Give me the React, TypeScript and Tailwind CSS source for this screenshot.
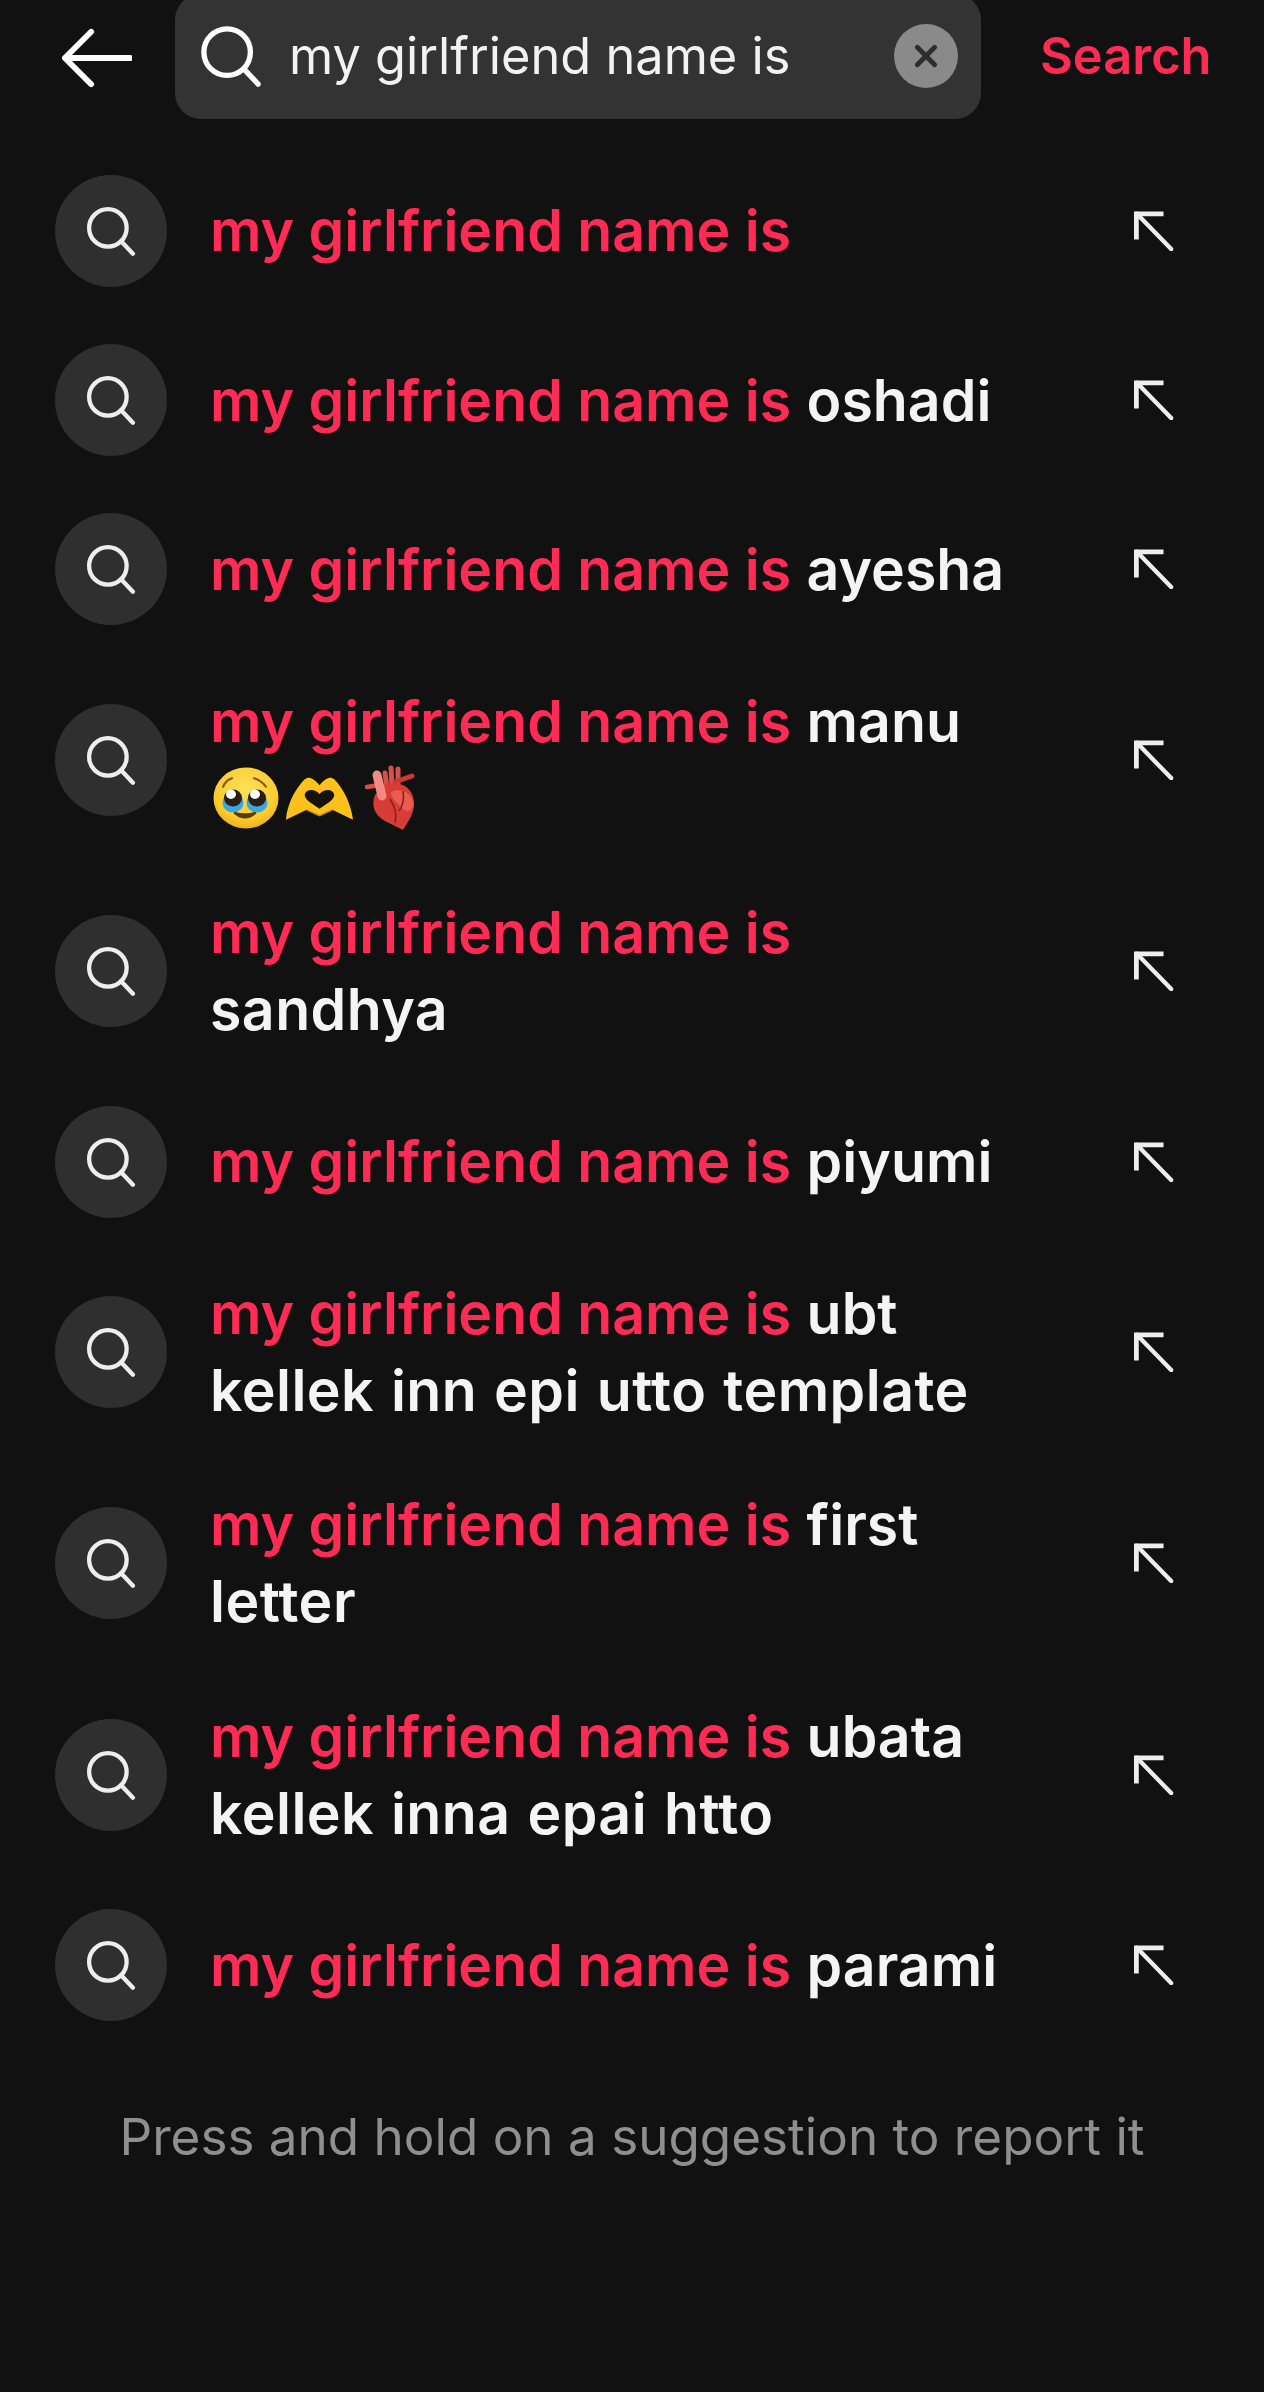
import React from "react";

function Lens({ className }: { className: string }) {
  return (
    <svg viewBox="0 0 64 64" fill="none" className={className}>
      <circle cx="28" cy="28" r="24" stroke="currentColor" strokeWidth="5.5" />
      <path d="M45 45 L60 61" stroke="currentColor" strokeWidth="5.5" strokeLinecap="round" />
    </svg>
  );
}

function UpLeft() {
  return (
    <svg viewBox="0 0 42 42" fill="none" className="h-[40px] w-[40px] text-[#eeeeee]">
      <path d="M2.5 30 V3 H31" stroke="currentColor" strokeWidth="5" strokeLinejoin="miter" />
      <path d="M3 3 L39 40" stroke="currentColor" strokeWidth="4.5" strokeLinecap="round" />
    </svg>
  );
}

function Pleading() {
  return (
    <svg viewBox="0 0 66 66" preserveAspectRatio="none" className="h-[62px] w-[66px]">
      <defs>
        <radialGradient id="faceGrad" cx="50%" cy="35%" r="70%">
          <stop offset="0%" stopColor="#fde05a" />
          <stop offset="70%" stopColor="#fbcb2e" />
          <stop offset="100%" stopColor="#e9a818" />
        </radialGradient>
      </defs>
      <circle cx="33" cy="33" r="32.5" fill="url(#faceGrad)" />
      <path d="M10 21 Q13 14 19 12" stroke="#8a5a12" strokeWidth="2.2" fill="none" strokeLinecap="round" />
      <path d="M41 12 Q48 14 53 21" stroke="#8a5a12" strokeWidth="2.2" fill="none" strokeLinecap="round" />
      <circle cx="20" cy="38" r="10.5" fill="#39a7e0" />
      <circle cx="44" cy="38" r="10.5" fill="#39a7e0" />
      <circle cx="20" cy="33" r="9" fill="#2a1d14" />
      <circle cx="44" cy="33" r="9" fill="#2a1d14" />
      <circle cx="18" cy="29" r="5" fill="#ffffff" />
      <circle cx="42" cy="29" r="5" fill="#ffffff" />
      <path d="M22 49 Q32 58 42 49 Q32 52 22 49 Z" stroke="#5b3a10" strokeWidth="2.5" fill="#5b3a10" strokeLinejoin="round" />
    </svg>
  );
}

function HeartHands() {
  return (
    <svg viewBox="0 0 70 46" className="h-[46px] w-[69px]">
      <path
        d="M1 45 C2 30 10 14 20 4 C24 1 28 2 35 10 C42 2 46 1 50 4 C60 14 67 30 69 45 L48 35 L35 41 L22 35 Z"
        fill="#fcc21b"
      />
      <path d="M22 35 L35 41 L48 35" stroke="#c98a10" strokeWidth="1.5" fill="none" />
      <path
        d="M35 34 C28 29 20 25 20 20 C21 14 30 13 35 19 C40 13 49 14 50 20 C50 25 42 29 35 34 Z"
        fill="#17120c"
      />
    </svg>
  );
}

function AnatomicalHeart() {
  return (
    <svg viewBox="0 0 50 66" className="h-[66px] w-[50px]">
      <path d="M20 8 L22 22 M26 3 L27 20 M33 4 L33 20" stroke="#d9504a" strokeWidth="5" strokeLinecap="round" />
      <path d="M30 17 L47 11" stroke="#c93a34" strokeWidth="5" strokeLinecap="round" />
      <path d="M2 22 L14 20" stroke="#d9504a" strokeWidth="4.5" strokeLinecap="round" />
      <path
        d="M10 30 C6 40 9 50 20 56 L38 65 C44 56 50 46 49 37 C48 26 42 21 35 19 L20 18 Z"
        fill="#d63d37"
      />
      <path d="M26 27 C36 22 47 28 48 38 C48 46 42 48 38 44 C32 38 26 34 26 27 Z" fill="#ea5b52" />
      <path d="M12 10 L17 31" stroke="#f28a84" strokeWidth="9" strokeLinecap="round" />
      <path d="M25 34 Q33 46 30 58 M38 26 Q40 38 34 46" stroke="#8f1f1c" strokeWidth="1.6" fill="none" />
    </svg>
  );
}

function Row({ rest, second, emoji }: { rest?: string; second?: string; emoji?: boolean }) {
  return (
    <div className="flex items-center py-[28.7px]">
      <div className="ml-[55px] flex h-[112px] w-[112px] shrink-0 items-center justify-center rounded-full bg-[#2f2f30] text-[#eeeeee]">
        <Lens className="h-[50px] w-[50px]" />
      </div>
      <div className="ml-[43px] w-[810px] text-[57.2px] leading-[77px] font-semibold text-[#f4f4f4]">
        <span className="text-[#fe2c55]">my girlfriend name is</span>
        {rest ? <span className="ml-[1px]"> {rest}</span> : null}
        {second ? (
          <>
            <br />
            <span className="tracking-[0.45px] [word-spacing:2px]">{second}</span>
          </>
        ) : null}
        {emoji ? (
          <span className="flex h-[77px] items-center pl-[3px]">
            <Pleading />
            <span className="ml-[6px]">
              <HeartHands />
            </span>
            <span className="ml-[11px]">
              <AnatomicalHeart />
            </span>
          </span>
        ) : null}
      </div>
      <div className="ml-[114px]">
        <UpLeft />
      </div>
    </div>
  );
}

export default function App() {
  return (
    <div className="min-h-[2392px] overflow-hidden bg-[#111112] font-['Inter','Liberation_Sans',sans-serif]">
      <div className="flex h-[118px] items-center">
        <svg viewBox="0 0 72 60" fill="none" className="ml-[62px] -mt-[3px] h-[60px] w-[70px] shrink-0 text-white">
          <path d="M30 3 L3 30 L30 57" stroke="currentColor" strokeWidth="6" strokeLinecap="round" strokeLinejoin="round" />
          <path d="M4 30 H70" stroke="currentColor" strokeWidth="6" strokeLinecap="round" />
        </svg>
        <div className="ml-[43px] -mt-[6px] flex h-[125px] w-[806px] shrink-0 items-center rounded-[26px] bg-[#333334]">
          <Lens className="ml-[25px] h-[62px] w-[62px] shrink-0 text-white" />
          <div className="ml-[27px] text-[50.5px] leading-[60px] text-[#f2f2f2]">my girlfriend name is</div>
          <div className="ml-auto mr-[23px] flex h-[64px] w-[64px] items-center justify-center rounded-full bg-[#8a8a8b]">
            <svg viewBox="0 0 24 24" fill="none" className="h-[26px] w-[26px] text-[#2e2e2f]">
              <path d="M4 4 L20 20 M20 4 L4 20" stroke="currentColor" strokeWidth="4.5" strokeLinecap="round" />
            </svg>
          </div>
        </div>
        <div className="ml-[59px] -mt-[6px] text-[50.5px] leading-[60px] font-semibold text-[#fe2c55]">Search</div>
      </div>
      <div className="mt-[28px]">
        <Row />
        <Row rest="oshadi" />
        <Row rest="ayesha" />
        <Row rest="manu" emoji />
        <Row second="sandhya" />
        <Row rest="piyumi" />
        <Row rest="ubt" second="kellek inn epi utto template" />
        <Row rest="first" second="letter" />
        <Row rest="ubata" second="kellek inna epai htto" />
        <Row rest="parami" />
      </div>
      <div className="mt-[56px] text-center text-[51.2px] leading-[60px] text-[#8f8f90]">
        Press and hold on a suggestion to report it
      </div>
    </div>
  );
}
